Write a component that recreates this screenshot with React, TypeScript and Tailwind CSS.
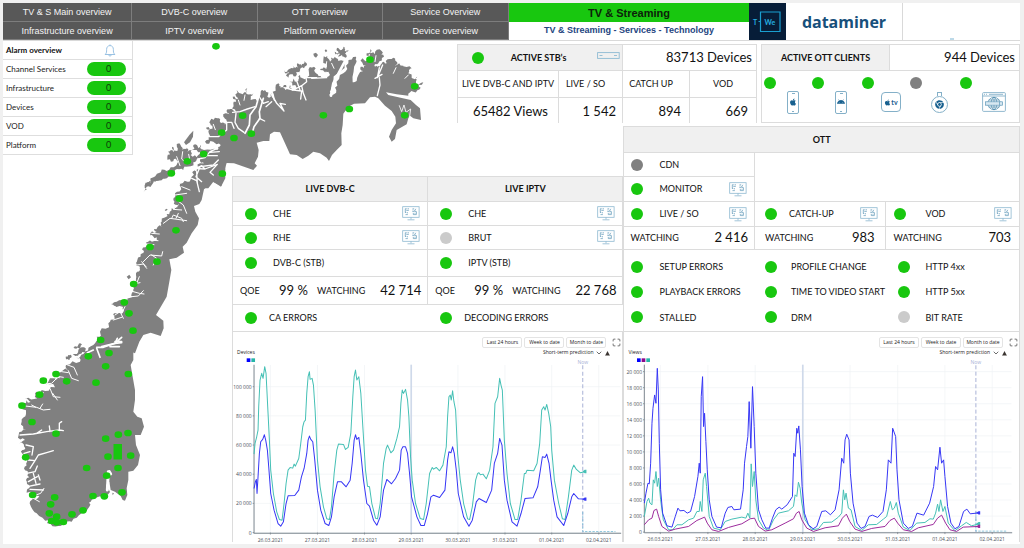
import React from "react";
import { FaAndroid, FaApple, FaChrome } from "react-icons/fa";
import { ChevronDown, Maximize } from "lucide-react";

type Pt = [number, number];

const parse = (s: string): Pt[] => s.trim().split(/\s+/).map((p) => p.split(",").map(Number) as Pt);

// Adds small inlets along a coarse coastline.
function coast(source: string, amount: number): string {
  let seed = 7;
  const rnd = () => {
    seed = (seed * 16807) % 2147483647;
    return seed / 2147483647 - 0.5;
  };
  let pts = parse(source);
  for (let pass = 0; pass < 2; pass++) {
    const next: Pt[] = [];
    pts.forEach((p, i) => {
      next.push(p);
      const q = pts[i + 1];
      if (!q) return;
      const len = Math.hypot(q[0] - p[0], q[1] - p[1]);
      if (len < 5) return;
      const off = rnd() * Math.min(len, 22) * amount;
      next.push([
        (p[0] + q[0]) / 2 + ((q[1] - p[1]) / len) * off,
        (p[1] + q[1]) / 2 - ((q[0] - p[0]) / len) * off,
      ]);
    });
    pts = next;
  }
  return pts.map((p) => p.map((n) => n.toFixed(1)).join(",")).join(" ");
}

const NORTH_COAST =
  "195,460 190,435 200,420 190,415 215,405 240,398 225,390 210,378 205,360 222,345 262,345 272,330 250,320 225,320 240,302 230,290 245,285 228,278 247,272 240,258 262,250 270,262 285,270 290,258 280,245 298,238 290,226 300,222 318,232 310,205 322,205 308,185 325,190 320,165 338,178 352,158 352,178 370,175 362,195 385,205 392,170 405,165 412,185 425,175 440,200 428,170 445,145 452,160 462,150 466,165 480,150 484,165 500,158 478,140 505,138 510,120 530,128 540,95 552,95 558,115 575,128 600,120 570,105 586,100 580,75 592,62 600,80 615,65 625,78 643,78 610,145 603,165 600,184 612,178 622,152 640,115 655,85 678,65 680,80 668,142 680,138 700,108 692,95 708,92 698,70 718,72 710,55 722,42 735,58 755,48 762,65 745,85 735,95 750,95 762,80 770,85 785,72 800,80 795,92 820,92 815,102 845,100 835,115 862,125 858,138 880,142 872,158 850,170 835,182";
const NORTH_INLAND =
  "800,178 768,172 775,180 842,195 858,210 870,220 873,255 850,250 840,242 835,250 830,268 800,285 795,312 785,320 777,305 785,285 798,265 796,245 785,228 765,212 745,190 735,185 720,187 705,205 672,206 655,215 640,236 638,270 634,295 635,330 620,345 606,360 597,378 590,368 570,355 550,350 535,362 518,372 500,360 480,358 465,325 450,292 432,290 420,298 418,318 400,318 380,323 386,345 384,365 374,385 381,392 370,405 312,385 290,384 285,400 286,430 273,455 250,440 235,460";

const MIDDLE_COAST =
  "405,610 265,610 280,585 300,545 325,520 345,505 342,490 372,482 368,470 333,462 350,455 382,452 398,440 400,425 395,405 415,395 408,375 420,360 410,348 412,330 430,310 436,292 450,270 470,262 450,256 470,246 462,237 485,230 485,215 510,205 500,192 515,175 532,165 520,150 525,130 542,110 535,100 562,95 575,80 590,65 600,40 640,20 676,20";
const MIDDLE_INLAND =
  "676,60 664,108 638,95 612,118 605,150 598,162 582,168 586,185 597,205 593,225 575,250 560,278 548,290 552,308 530,323 508,328 514,360 508,395 500,440 468,495 490,512 491,535 482,558 452,548 430,555 418,575";

const SOUTH_COAST =
  "328,425 326,448 310,470 275,480 268,500 245,520 215,545 190,550 175,558 142,550 148,540 110,520 93,500 95,480 118,468 80,458 90,440 78,420 84,400 74,380 82,360 66,340 76,325 58,310 75,300 56,285 78,270 65,245 78,222 70,190 92,186 75,176 112,175 105,160 125,150 165,142 130,130 160,115 180,115 170,95 205,92 198,75 240,65 228,52 250,42 285,22 290,-10";
const SOUTH_INLAND =
  "425,-10 400,30 400,60 392,75 398,110 405,150 405,180 400,215 412,230 425,235 432,260 422,285 405,285 408,315 420,345 414,375 400,392 385,395 385,420 380,445 382,465 375,482 368,480 362,468 345,455 332,450";

const DOTS: { at: [number, number]; pts: string }[] = [
  { at: [130, 35], pts: "258,34 720,74 854,154 658,222 580,241 824,241 338,242 364,296 312,309 275,293 221,357 172,379 124,415 277,416" },
  { at: [0, 150], pts: "538,146 528,241 450,291 471,335 401,402 373,457 387,490 399,542 302,570" },
  {
    at: [0, 340],
    pts: "327,39 265,49 317,79 385,102 168,102 130,122 200,124 288,128 119,164 66,197 96,246 168,281 317,296 355,284 384,279 77,352 324,350 392,347 260,384 354,384 320,407 98,465 164,472 279,468 313,469 366,457 152,493 148,520 170,530 155,543 170,547 190,546 216,523 249,511",
  },
];

function NorwayMap() {
  const third = "scale(0.33333)";
  return (
    <svg viewBox="3 41 426 503" className="col-start-1 row-start-1 w-[426px]" role="img" aria-label="Network map">
      <g fill="#808080">
        <g transform={`translate(130 35) ${third}`}>
          <polygon points={`${coast(NORTH_COAST, 0.9)} ${NORTH_INLAND}`} />
          <polygon points="162,322 178,300 190,287 189,305 180,322 168,330" />
          <polygon
            points={coast("112,365 114,350 130,352 126,335 142,348 148,325 158,345 170,335 172,352 185,345 182,360 205,368 190,382 168,395 160,405 135,405 128,420 108,422 95,436 75,432 68,446 50,452 45,446 72,426 85,415 110,408 138,392 150,378 132,372 112,374", 0.9)}
          />
          <polygon points={coast("185,345 190,330 205,340 212,330 215,342 205,352 200,345", 0.8)} />
          <polygon points={coast("462,105 478,102 490,104 488,92 505,98 502,85 515,92 524,78 529,92 512,100 508,112 495,108 500,120 482,118 475,128 468,122 478,113 464,112", 0.8)} />
          <polygon points={coast("614,50 626,52 622,38 636,44 640,35 644,48 656,46 645,56 650,66 636,60 626,66 630,56 616,58", 0.7)} />
          <polygon points="550,56 558,53 564,60 558,68 552,64" />
          <polygon points="584,46 588,43 592,48 587,52" />
        </g>
        <g transform={`translate(0 150) ${third}`}>
          <polygon points={`${coast(MIDDLE_COAST, 0.9)} ${MIDDLE_INLAND}`} />
          <polygon points={coast("430,128 434,105 445,98 455,84 475,72 500,68 512,62 505,80 482,84 470,90 450,96 440,110", 0.8)} />
          <polygon points="494,180 500,176 503,179 497,183" />
          <polygon points="380,380 388,374 393,382 386,388" />
          <polygon points="425,312 431,308 431,316 426,318" />
          <polygon points={coast("220,592 235,585 242,580 240,592 225,596", 0.7)} />
          <polygon points={coast("335,463 345,457 358,464 345,468", 0.7)} />
        </g>
        <g transform={`translate(0 340) ${third}`}>
          <polygon points={`${coast(SOUTH_COAST, 0.8)} ${SOUTH_INLAND}`} />
          <polygon points={coast("222,20 238,12 246,14 240,24 228,26", 0.7)} />
          <polygon points={coast("218,42 235,30 258,26 256,36 240,42 226,48", 0.7)} />
          <polygon points={coast("197,50 205,45 215,50 208,60 198,58", 0.7)} />
          <polygon points="337,458 342,460 338,466" />
        </g>
      </g>
      <g fill="none" stroke="#fff" strokeLinejoin="round" strokeLinecap="round">
        <g transform={`translate(130 35) ${third}`} strokeWidth="4">
          <path d="M748,128 L750,150 L742,182 M758,90 L742,128 L748,98 M735,130 L756,118" />
          <path d="M808,212 L815,230 L822,210 L828,232 L842,222 L838,250" strokeWidth="2.500" />
          <path d="M385,190 L378,215 L360,240 L358,270 L345,295 M400,190 L388,230 L390,250 L372,275 L368,290" strokeWidth="5" />
          <path d="M308,232 L330,230 L352,222 L375,215 M318,235 L315,262 L325,280 L342,292 M282,262 L305,262 L312,280 M385,180 L400,205 L415,200" />
          <path d="M425,178 L440,205 L462,228 L450,205 L466,208 M425,200 L408,215 M388,250 L404,258" />
          <path d="M462,158 L490,165 L515,152 L530,140 L528,128 L560,128 M490,165 L515,168 L512,192 M515,152 L520,175 L528,195 M545,130 L590,128 M498,132 L510,165" />
          <path d="M645,78 L610,145 L603,182 M685,78 L674,135" strokeWidth="8" />
          <path d="M552,90 L570,112 L590,112 M590,80 L588,100 M605,85 L612,100" strokeWidth="3" />
          <path d="M188,400 L225,402 L262,388 L240,412 L250,420 M225,402 L215,392 L190,405 M140,412 L190,400" />
          <path d="M205,372 L225,368 L240,350 L262,340 M230,362 L262,362 M240,352 L268,350 M238,305 L265,305 L290,285 L290,262" />
          <path d="M140,365 L150,392 M158,350 L155,372 L166,382 M176,358 L180,378 M125,392 L142,382" strokeWidth="3" />
          <path d="M715,75 L718,58 M738,62 L735,80 M250,268 L256,284 M325,195 L330,210 M345,180 L342,196 M798,98 L790,115 M835,120 L825,130" strokeWidth="3" />
        </g>
        <g transform={`translate(0 150) ${third}`} strokeWidth="3">
          <path d="M580,60 L600,50 L640,45 L655,30 M600,50 L588,80 L605,95 M575,85 L590,92 L598,125 M590,65 L592,100" strokeWidth="4" />
          <path d="M530,150 L550,165 L560,190 M535,165 L520,178 L545,180 M525,135 L560,130 M545,110 L570,120" />
          <path d="M490,220 L510,205 L560,212 M515,205 L520,195 L545,205 L550,215 M535,190 L528,205" />
          <path d="M430,335 L450,315 L485,318 L488,305 M455,315 L470,325 L460,345 M412,345 L430,342 L440,355 M425,335 L438,350" />
          <path d="M455,250 L478,252 M448,270 L474,272 M440,282 L462,284" />
          <path d="M395,440 L415,438 L430,422 M400,425 L418,430 L432,432 M418,380 L410,400 L420,398" />
          <path d="M345,495 L360,485 L370,505 M340,510 L365,502 M375,470 L365,490" />
          <path d="M305,590 L345,580 L365,562 M330,590 L358,590 M345,575 L365,575" strokeWidth="5" />
        </g>
        <g transform={`translate(0 340) ${third}`} strokeWidth="3">
          <path d="M290,25 L300,52 M290,22 L310,22 L345,10 L365,8 M262,38 L280,30 M345,10 L352,-5" strokeWidth="5" />
          <path d="M195,72 L222,82 L232,105 M205,92 L215,115 L235,122 M185,95 L205,98 M178,110 L190,112" />
          <path d="M130,132 L155,130 L170,115 M112,150 L150,145 L160,170 L180,172 M158,160 L172,180 M112,160 L130,158" />
          <path d="M75,198 L110,202 L130,210 L150,208 M120,205 L128,192 M95,195 L108,202" />
          <path d="M60,285 L100,282 L140,275 L178,270 L178,250 L185,245 M110,280 L125,270 M150,275 L148,258 M178,270 L190,272" strokeWidth="4" />
          <path d="M78,315 L100,320 L96,345 M72,340 L90,335 M85,360 L105,362 L115,345 L140,338 L160,332 M105,362 L90,385" strokeWidth="4" />
          <path d="M80,400 L105,395 L112,378 M85,425 L112,410 M82,440 L120,432 M100,400 L108,430 M115,405 L120,420 M90,448 L130,450" strokeWidth="4" />
          <path d="M100,468 L122,460 L132,445 M100,475 L118,485" />
          <path d="M325,395 L322,450 M328,395 L332,402" strokeWidth="9" />
        </g>
      </g>
      <g fill="#18c70f">
        {DOTS.map((group) => (
          <g key={group.at[1]} transform={`translate(${group.at.join(" ")}) ${third}`}>
            {parse(group.pts).map(([x, y]) => (
              <ellipse key={`${x}-${y}`} cx={x} cy={y} rx="11.5" ry="10" />
            ))}
          </g>
        ))}
        <rect x="113.5" y="444" width="8.5" height="15.5" />
      </g>
    </svg>
  );
}

const DOT_COLORS = { ok: "bg-[#18c70f]", off: "bg-[#808080]", idle: "bg-[#cbcbcb]" };
type State = keyof typeof DOT_COLORS;

function Dot({ state = "ok" }: { state?: State }) {
  return <span className={`size-3 shrink-0 rounded-full ${DOT_COLORS[state]}`} />;
}

function MonitorIcon() {
  return (
    <svg viewBox="0 0 18 15" className="h-[15px] w-[18px] shrink-0" fill="none" stroke="#8db8d0" strokeWidth="0.8">
      <rect x="0.7" y="0.7" width="16.4" height="10.6" />
      <path d="M9 11.3v2M5.5 13.8h7" />
      <g stroke="#5f98b8" strokeWidth="0.7">
        <path d="M3.300 2.600v4M3.300 2.800h1.500M5.500 2.800h1.500M4.300 4.400h2.500M3 6.400h1.200M5.300 6v1.400M3.500 8.600h2.400" />
        <path d="M10.500 2.800h1.700M10.500 4h1M10.300 5.600h2M13.800 2.800l-1.400 2.400 2 .4v2.800M11.300 7v1.600h3.200M13 6.800v1" />
      </g>
    </svg>
  );
}

const NAV = [
  "TV & S Main overview",
  "DVB-C overview",
  "OTT overview",
  "Service Overview",
  "Infrastructure overview",
  "IPTV overview",
  "Platform overview",
  "Device overview",
];

function Header() {
  return (
    <header className="flex h-[38px] border-b border-[#d9d9d9] bg-white font-['Liberation_Sans',Arial,sans-serif]">
      <nav className="grid w-[506px] shrink-0 grid-cols-[129fr_125fr_125fr_126fr] grid-rows-2 text-[9px] text-[#f4f4f4]">
        {NAV.map((label) => (
          <a key={label} href="#" className="flex items-center justify-center border-r border-b border-[#7d7d7d] bg-[#585858] pt-0.5">
            {label}
          </a>
        ))}
      </nav>
      <div className="grid w-60 shrink-0 grid-rows-2 text-center font-bold">
        <h1 className="flex items-center justify-center bg-[#18c70f] pt-0.5 text-[11px] text-[#0c220a]">TV &amp; Streaming</h1>
        <p className="flex items-center justify-center text-[9px] text-[#24457f]">TV &amp; Streaming - Services - Technology</p>
      </div>
      <div className="flex w-[37px] shrink-0 items-center justify-center bg-[#071d38]">
        <svg viewBox="0 0 37 37" className="size-[37px]" fill="none" stroke="#1a9fd0" strokeWidth="1.2">
          <path d="M11.5 15V9h19.5v19.5H11.5V21.500M9.500 18.500h2M11.500 15v6.500" />
          <g fill="#25aee0" stroke="none" fontFamily="Lato, sans-serif" fontWeight="700">
            <text x="4" y="21.5" fontSize="7">T</text>
            <text x="15.5" y="21.5" fontSize="7">We</text>
          </g>
        </svg>
      </div>
      <div className="flex w-[117px] shrink-0 items-center justify-center border-r border-[#d9d9d9] font-['Open_Sans',sans-serif] text-[16px] font-bold text-[#17507b]">
        dataminer
      </div>
      <div className="flex flex-1 items-end justify-center pr-5">
        <span className="h-0.5 w-1 bg-[#bcd9e8]" />
      </div>
    </header>
  );
}

function AlarmOverview() {
  return (
    <table className="w-[130px] border-separate border-spacing-0 border-r border-[#dedede] bg-white text-[8px]">
      <thead>
        <tr>
          <th className="h-[19px] border-b border-[#dedede] pl-[3px] text-left font-bold">Alarm overview</th>
          <th className="border-b border-[#dedede]">
            <svg viewBox="0 0 12 13" className="mx-auto h-[13px] w-3" fill="none" stroke="#8ebbe0" strokeWidth="0.9">
              <path d="M1 10.5h10M1.2 10.3C2.8 9 2.6 7.5 2.6 5.5 2.6 3 4 1.6 6 1.6s3.4 1.4 3.4 3.9c0 2 -.2 3.500 1.400 4.800M6 .5v1M4.800 11c.2 1.500 2.200 1.500 2.400 0" />
            </svg>
          </th>
        </tr>
      </thead>
      <tbody>
        {["Channel Services", "Infrastructure", "Devices", "VOD", "Platform"].map((name) => (
          <tr key={name}>
            <td className="h-[19px] border-b border-[#dedede] pl-[3px] text-[#222]">{name}</td>
            <td className="w-[45px] border-b border-[#dedede]">
              <span className="block h-3.5 w-[39px] rounded-full bg-[#18c70f] pl-1 text-center text-[9px] leading-[14px] text-[#0c3a08]">0</span>
            </td>
          </tr>
        ))}
      </tbody>
    </table>
  );
}

function ActiveStbs() {
  return (
    <table className="w-[299px] table-fixed border-collapse bg-white">
      <colgroup>
        <col className="w-[101px]" />
        <col className="w-16" />
        <col className="w-[67px]" />
        <col className="w-[67px]" />
      </colgroup>
      <tbody>
        <tr className="h-[26px]">
          <th colSpan={2} className="border border-[#dcdcdc] bg-[#f0f0f0]">
            <div className="flex items-center pl-3.5 font-bold">
              <Dot />
              <span className="flex-1 pr-1">ACTIVE STB&rsquo;s</span>
              <svg viewBox="0 0 23 8" className="mr-0.5 mb-1 h-2 w-[23px]" fill="none" stroke="#8ebbd3" strokeWidth="0.9">
                <rect x="0.6" y="0.6" width="21.600" height="5.800" />
                <path d="M2.500 3.500h3M17 3.500h3" />
              </svg>
            </div>
          </th>
          <td colSpan={2} className="border border-[#dcdcdc] pr-1 text-right text-[13px]">83713 Devices</td>
        </tr>
        <tr className="h-[27px]">
          {["LIVE DVB-C AND IPTV", "LIVE / SO", "CATCH UP", "VOD"].map((h, i) => (
            <th key={h} className={`border border-[#dcdcdc] font-normal whitespace-nowrap ${i > 0 && i < 3 ? "pr-2.5" : ""}`}>
              {h}
            </th>
          ))}
        </tr>
        <tr className="h-[25px] text-right text-[13px]">
          <td className="border-x border-[#dcdcdc] pt-0.5 pr-2.5">65482 Views</td>
          <td className="border-x border-[#dcdcdc] pt-0.5 pr-1.5">1 542</td>
          <td className="border-x border-[#dcdcdc] pt-0.5 pr-2">894</td>
          <td className="border-x border-[#dcdcdc] pt-0.5 pr-2">669</td>
        </tr>
      </tbody>
    </table>
  );
}

function Phone({ children }: { children: React.ReactNode }) {
  return (
    <span className="flex h-[23px] w-3 flex-col items-center justify-between rounded-[2px] border border-[#84b0c8] py-px text-[#17608f]">
      <span className="h-px w-[3px] bg-[#84b0c8]" />
      {children}
      <span className="h-px w-0.5 bg-[#84b0c8]" />
    </span>
  );
}

const CLIENTS: { name: string; state: State; icon: React.ReactNode }[] = [
  { name: "iOS", state: "ok", icon: <Phone><FaApple className="size-2" /></Phone> },
  { name: "Android", state: "ok", icon: <Phone><FaAndroid className="size-2" /></Phone> },
  {
    name: "Apple TV",
    state: "ok",
    icon: (
      <span className="flex size-5 items-center justify-center rounded border border-[#84b0c8] text-[7px] leading-none font-bold text-[#17608f]">
        <FaApple />
        tv
      </span>
    ),
  },
  {
    name: "Chromecast",
    state: "off",
    icon: (
      <span className="flex flex-col items-center text-[9px] text-[#17608f]">
        <span className="h-1 w-[5px] border border-b-0 border-[#84b0c8]" />
        <span className="flex size-[17px] items-center justify-center rounded-full border border-[#84b0c8]">
          <FaChrome />
        </span>
      </span>
    ),
  },
  {
    name: "Web",
    state: "ok",
    icon: (
      <svg viewBox="0 0 24 20" className="ml-2.5 h-5 w-6 shrink-0" fill="none" stroke="#84b0c8" strokeWidth="0.9">
        <rect x="0.6" y="0.6" width="22.800" height="18.800" rx="1" />
        <path d="M.6 4h22.800M2 2.300h1M4 2.300h1M7 2.300h14" />
        <g stroke="#4c8bad" strokeWidth="0.7">
          <circle cx="12" cy="11.500" r="6.200" />
          <ellipse cx="12" cy="11.500" rx="2.800" ry="6.200" />
          <path d="M12 5.300v12.400M6.800 8h10.400M6.800 15h10.400" />
        </g>
        <rect x="3.500" y="9.800" width="17" height="3.400" fill="#d8e8f1" stroke="#5f98b8" strokeWidth="0.7" />
        <path d="M17.500 9.800v3.400" stroke="#5f98b8" strokeWidth="0.7" />
      </svg>
    ),
  },
];

function ActiveOtt() {
  return (
    <section className="flex w-[259px] flex-col border border-[#dcdcdc] bg-white">
      <div className="flex h-[26px] items-center border-b border-[#dcdcdc]">
        <h2 className="flex h-full w-32 items-center justify-center border-r border-[#dcdcdc] bg-[#f0f0f0] font-bold">
          ACTIVE OTT CLIENTS
        </h2>
        <p className="flex-1 pr-1 text-right text-[13px]">944 Devices</p>
      </div>
      <ul className="grid flex-1 grid-cols-[48px_50px_48px_50px_1fr] pl-0.5">
        {CLIENTS.map((c) => (
          <li key={c.name} className="flex pt-1.5">
            <Dot state={c.state} />
            <span className="flex h-[38px] w-[34px] items-center justify-center pt-3">{c.icon}</span>
          </li>
        ))}
      </ul>
    </section>
  );
}

function Item({
  label,
  state = "ok",
  monitor = false,
  className = "gap-4 pl-3",
}: {
  label: string;
  state?: State;
  monitor?: boolean;
  className?: string;
}) {
  return (
    <div className={`flex items-center pr-[7px] ${className}`}>
      <Dot state={state} />
      <span className="flex-1 whitespace-nowrap">{label}</span>
      {monitor && <MonitorIcon />}
    </div>
  );
}

function Watching({ value, className = "" }: { value: string; className?: string }) {
  return (
    <div className={`flex items-center justify-between ${className}`}>
      <span>WATCHING</span>
      <span className="text-[13px]">{value}</span>
    </div>
  );
}

function LiveColumn({
  title,
  value,
  rows,
}: {
  title: string;
  value: string;
  rows: { label: string; state?: State; monitor?: boolean }[];
}) {
  return (
    <div className="grid grid-rows-[25px_24px_24px_27px_27px] divide-y divide-[#dcdcdc] border-r border-b border-[#dcdcdc]">
      <h2 className="flex items-center justify-center bg-[#f0f0f0] font-bold">{title}</h2>
      {rows.map((r) => (
        <Item key={r.label} {...r} />
      ))}
      <div className="grid grid-cols-[39px_38px_1fr] items-center pr-1.5 pl-[7px]">
        <span>QOE</span>
        <span className="text-[13px] whitespace-nowrap">99 %</span>
        <Watching value={value} />
      </div>
    </div>
  );
}

function LivePanel() {
  return (
    <section className="border-t border-l border-[#dcdcdc] bg-white">
      <div className="grid grid-cols-2">
        <LiveColumn
          title="LIVE DVB-C"
          value="42 714"
          rows={[{ label: "CHE", monitor: true }, { label: "RHE", monitor: true }, { label: "DVB-C (STB)" }]}
        />
        <LiveColumn
          title="LIVE IPTV"
          value="22 768"
          rows={[
            { label: "CHE", monitor: true },
            { label: "BRUT", state: "idle", monitor: true },
            { label: "IPTV (STB)" },
          ]}
        />
      </div>
      <div className="grid h-[27px] grid-cols-2 border-b border-[#dcdcdc]">
        <Item label="CA ERRORS" className="gap-3 pl-3" />
        <Item label="DECODING ERRORS" className="gap-3 pl-3" />
      </div>
    </section>
  );
}

const OTT_ERRORS: { label: string; state?: State }[] = [
  { label: "SETUP ERRORS" },
  { label: "PROFILE CHANGE" },
  { label: "HTTP 4xx" },
  { label: "PLAYBACK ERRORS" },
  { label: "TIME TO VIDEO START" },
  { label: "HTTP 5xx" },
  { label: "STALLED" },
  { label: "DRM" },
  { label: "BIT RATE", state: "idle" },
];

function OttPanel() {
  const line = "border-[#dcdcdc]";
  return (
    <section className={`border ${line} border-b-0 bg-white`}>
      <h2 className={`flex h-[26px] items-center justify-center border-b ${line} bg-[#f0f0f0] font-bold`}>OTT</h2>
      <div className="grid grid-cols-[131fr_131fr_134fr] grid-rows-[24px_25px_25px_23px]">
        <div className={`grid border-r border-b ${line}`}>
          <Item label="CDN" state="off" className="gap-4 pl-[7px]" />
        </div>
        <div className={`col-span-2 row-span-2 border-b ${line}`} />
        <div className={`grid border-r border-b ${line}`}>
          <Item label="MONITOR" monitor className="gap-4 pl-[7px]" />
        </div>
        <div className={`grid border-r border-b ${line}`}>
          <Item label="LIVE / SO" monitor className="gap-4 pl-[7px]" />
        </div>
        <div className={`grid border-r border-b ${line}`}>
          <Item label="CATCH-UP" monitor className="gap-3 pl-2.5" />
        </div>
        <div className={`grid border-b ${line}`}>
          <Item label="VOD" monitor className="gap-5 pl-2" />
        </div>
        <Watching value="2 416" className={`border-r border-b ${line} pr-1.5 pl-1.5`} />
        <Watching value="983" className={`border-r border-b ${line} pr-2.5 pl-2.5`} />
        <Watching value="703" className={`border-b ${line} pr-2 pl-2`} />
      </div>
      <div className={`grid h-[82px] grid-cols-[minmax(0,131fr)_minmax(0,131fr)_minmax(0,134fr)] grid-rows-3 border-b ${line} pt-1 pb-px`}>
        {OTT_ERRORS.map((e, i) => (
          <Item key={e.label} {...e} className={i % 3 === 1 ? "gap-3.5 pl-2.5" : i % 3 === 2 ? "gap-4 pl-3" : "gap-4 pl-[7px]"} />
        ))}
      </div>
    </section>
  );
}

interface ChartSpec {
  label: string;
  legend: string[];
  viewBox: string;
  legendX: number;
  left: number;
  axis: { y: number; text: string }[];
  days: number[];
  nowX: number;
  series: { color: string; points: string; end: string }[];
}

const DAY_LABELS = ["26.03.2021", "27.03.2021", "28.03.2021", "29.03.2021", "30.03.2021", "31.03.2021", "01.04.2021", "02.04.2021"];

const thousands = (n: number) => (n === 0 ? "0" : `${n} 000`);

const DEVICES: ChartSpec = {
  label: "Devices",
  legend: ["#0000ff", "#26b5a8"],
  viewBox: "3 28 389 184",
  legendX: 50,
  left: 72,
  axis: [0, 20, 40, 60, 80, 100].map((v) => ({ y: 607 - v * 4.37, text: thousands(v) })),
  days: [121, 262, 403, 543, 683, 824, 964, 1105],
  nowX: 1057,
  series: [
    {
      color: "#45c0b5",
      end: "1066,424",
      points:
        "72,372 75,340 80,320 84,300 86,230 90,150 95,130 99,145 104,110 108,130 110,170 114,250 118,330 122,420 130,490 140,545 148,568 156,570 162,520 168,460 174,420 180,412 188,414 192,402 196,408 206,385 212,340 218,290 222,275 226,270 230,190 234,140 238,125 240,148 246,145 250,165 255,240 262,390 270,470 280,530 290,566 298,568 304,530 312,430 320,360 325,342 340,343 346,358 354,352 362,310 368,200 372,140 376,120 380,150 386,140 392,190 398,290 406,420 412,468 418,470 425,520 436,564 442,566 450,520 460,400 468,355 472,345 482,368 490,360 500,325 508,290 512,220 516,180 520,190 526,178 532,210 536,260 541,380 546,450 556,520 570,565 580,568 588,520 598,430 606,412 610,417 618,412 628,422 638,405 648,350 652,260 656,200 660,195 663,210 667,182 671,215 676,240 682,370 690,450 700,520 712,566 718,568 726,530 736,450 742,430 746,428 750,434 758,432 768,446 778,420 788,350 794,220 802,200 808,145 812,165 816,180 822,330 830,430 840,520 854,568 862,568 872,510 882,430 886,430 890,420 910,422 920,400 928,340 934,240 940,230 944,240 949,223 955,250 961,290 964,360 972,450 985,520 996,566 1004,568 1014,500 1024,420 1030,405 1038,418 1050,428 1066,424",
    },
    {
      color: "#3636f5",
      end: "1066,507",
      points:
        "72,475 76,455 79,448 81,490 84,440 88,370 92,335 98,328 103,314 107,330 112,360 116,410 122,490 132,540 144,580 152,588 160,575 168,520 174,497 194,496 206,480 214,440 222,415 230,370 234,330 238,318 242,328 248,335 254,390 262,480 272,540 285,580 296,586 304,560 312,500 322,455 334,455 348,470 360,450 366,400 372,330 376,314 380,328 386,322 392,370 400,450 410,520 418,528 430,570 440,585 450,560 460,480 470,448 484,461 496,445 508,420 513,360 518,350 526,350 532,370 538,430 544,500 560,560 572,586 582,586 592,550 602,500 610,495 628,502 644,480 652,390 656,365 662,368 667,350 672,370 678,420 684,490 700,560 716,588 726,570 738,515 746,505 768,517 784,480 792,400 802,370 808,325 815,345 822,450 830,510 845,575 860,588 872,550 884,505 908,503 922,470 930,420 936,380 944,382 949,372 956,400 962,450 970,510 980,560 1000,586 1012,550 1024,500 1030,490 1044,506 1066,507",
    },
  ],
};

const VIEWS: ChartSpec = {
  label: "Views",
  legend: ["#0000ff", "#8b0a8b", "#26b5a8"],
  viewBox: "2 28 395 184",
  legendX: 45,
  left: 67,
  axis: [0, 2, 4, 6, 8, 10, 12, 14, 16, 18, 20].map((v) => ({ y: 607 - v * 24.1, text: thousands(v) })),
  days: [115, 258, 400, 543, 685, 828, 970, 1112],
  nowX: 1063,
  series: [
    {
      color: "#45c0b5",
      end: "1074,582",
      points:
        "67,560 75,515 80,505 84,520 90,525 94,450 98,460 102,425 106,470 110,445 116,510 124,570 140,600 152,600 165,585 180,585 200,570 215,565 225,545 232,545 235,515 240,545 244,450 250,430 254,470 262,560 275,595 295,600 310,575 330,568 360,562 372,565 378,550 384,565 388,402 392,470 397,425 402,510 410,570 425,595 440,602 455,570 470,550 500,543 515,530 520,495 525,500 530,457 535,475 540,520 550,570 570,600 590,597 605,578 630,577 650,562 660,550 665,480 669,510 673,490 680,535 688,540 700,590 720,602 740,585 765,584 785,568 795,560 806,515 812,540 818,535 824,518 830,550 845,592 865,602 885,580 910,578 925,567 935,568 942,550 948,523 952,545 957,510 964,545 970,530 980,580 1000,603 1020,588 1034,578 1050,588 1074,582",
    },
    {
      color: "#9c2a9c",
      end: "1074,590",
      points:
        "67,585 80,570 90,565 96,542 104,538 110,560 120,590 140,604 160,598 200,590 225,572 248,562 256,580 270,600 290,605 320,593 360,582 385,567 398,565 410,590 430,604 450,600 490,580 515,567 524,550 532,545 540,570 555,595 575,605 610,594 650,588 662,565 674,553 684,575 700,598 720,605 750,596 790,590 805,572 818,565 828,580 845,600 870,605 890,594 935,584 948,565 960,556 972,580 985,600 1005,605 1025,592 1074,590",
    },
    {
      color: "#3636f5",
      end: "1074,549",
      points:
        "67,520 72,490 78,460 82,462 86,400 90,280 93,235 98,195 102,220 106,115 109,180 112,340 116,480 122,550 135,588 150,592 160,560 168,535 174,543 186,542 196,550 206,545 218,500 228,440 232,400 235,430 238,200 242,140 245,290 248,250 252,335 256,420 262,510 270,560 284,592 298,594 310,550 318,533 330,530 336,540 356,538 364,480 368,400 374,350 378,320 382,215 387,355 392,170 397,290 402,430 410,540 420,570 432,595 442,595 452,565 462,540 472,532 480,538 496,525 512,500 516,370 520,380 525,295 528,310 531,288 536,360 541,470 548,550 560,585 574,597 585,590 600,545 612,543 626,555 640,540 652,480 660,385 666,400 670,330 675,313 682,330 686,430 694,520 706,580 718,596 730,590 742,560 752,556 768,563 784,545 794,480 800,390 808,400 813,295 822,320 826,420 832,510 845,580 860,596 872,590 886,550 906,556 924,520 936,470 942,410 948,420 955,352 960,400 966,390 970,440 978,530 988,580 1000,597 1012,590 1026,545 1036,538 1046,552 1074,549",
    },
  ],
};

function Chart({ spec }: { spec: ChartSpec }) {
  return (
    <section className="flex flex-col border-x border-[#dcdcdc] bg-white pt-[5px] font-['Open_Sans','Noto_Sans',sans-serif] text-[5px] text-[#222]">
      <div className="flex h-[11px] items-center justify-end gap-0.5 pr-px">
        {["Last 24 hours", "Week to date", "Month to date"].map((b) => (
          <button key={b} type="button" className="h-[11px] w-10 rounded-[2px] border border-[#e4e4e4] bg-white leading-[9px] whitespace-nowrap">
            {b}
          </button>
        ))}
        <button type="button" aria-label="Full screen" className="ml-1 text-[#444]">
          <Maximize size={9} strokeWidth={2} />
        </button>
      </div>
      <div className="flex h-2.5 items-center justify-between pr-3 pl-1">
        <span>{spec.label}</span>
        <button type="button" className="flex items-center gap-0.5">
          Short-term prediction
          <ChevronDown size={8} strokeWidth={2} />
          <svg viewBox="0 0 6 6" className="size-[5px]" fill="#3a3430">
            <path d="M3 0 5 4 6 5.500H0L1 4z" />
          </svg>
        </button>
      </div>
      <svg viewBox={spec.viewBox} className="w-full" fill="none" role="img" aria-label={`${spec.label} over time`}>
        <g transform="scale(0.33333)" fontFamily="'Open Sans', 'Noto Sans', sans-serif" fontSize="15">
          {spec.legend.map((c, i) => (
            <rect key={c} x={spec.legendX + i * 14} y="85" width="11" height="11" fill={c} />
          ))}
          {spec.axis.map((a) => (
            <g key={a.text}>
              <path d={`M${spec.left - 4} ${a.y}H1170`} stroke="#eef1f4" strokeWidth="2" />
              <path d={`M${spec.left - 4} ${a.y}h4`} stroke="#666f78" strokeWidth="2" />
              <text x={spec.left - 7} y={a.y + 6} textAnchor="end" fill="#4a5158">
                {a.text}
              </text>
            </g>
          ))}
          {spec.days.map((x, i) => (
            <g key={x}>
              <path d={`M${x} 105V607`} stroke="#eef1f4" strokeWidth="2" />
              <path d={`M${x} 607v6`} stroke="#666f78" strokeWidth="2" />
              <text x={x} y="634" textAnchor="middle" fill="#4a5158">
                {DAY_LABELS[i]}
              </text>
            </g>
          ))}
          <path d="M543 104V607" stroke="#cfd9ea" strokeWidth="5" />
          <path d={`M${spec.left} 104V609H1172`} stroke="#7b868f" strokeWidth="3" />
          <path d={`M${spec.nowX} 106V607`} stroke="#a9b2d6" strokeWidth="3" strokeDasharray="12 7" />
          <text x={spec.nowX} y="102" textAnchor="middle" fill="#a9b2d6">
            Now
          </text>
          <path d={`M${spec.nowX} 545V604H1155`} stroke="#79bcd6" strokeWidth="2.500" strokeDasharray="7 4" />
          {spec.series.map((s) => {
            const [ex, ey] = s.end.split(",").map(Number);
            return (
              <g key={s.color}>
                <polyline points={s.points} stroke={s.color} strokeWidth="3" strokeLinejoin="round" />
                <path d={`M${ex - 10} ${ey}l7 -5h5v10h-5z`} fill={s.color} />
              </g>
            );
          })}
        </g>
      </svg>
    </section>
  );
}

export default function App() {
  return (
    <div className="min-h-screen bg-[#f0f0f0] p-[3px] pr-1 font-['Lato',sans-serif] text-[9px] text-[#111]">
      <Header />
      <main className="grid bg-white">
        <NorwayMap />
        <div className="col-start-1 row-start-1 flex items-start">
          <div className="w-[229px] shrink-0">
            <AlarmOverview />
          </div>
          <div className="min-w-0 flex-1">
            <div className="flex h-[85px] items-start justify-end gap-1 pt-[3px]">
              <ActiveStbs />
              <div className="flex h-[79px]">
                <ActiveOtt />
              </div>
            </div>
            <div className="grid grid-cols-[391fr_396fr] items-start">
              <div className="pt-[50px]">
                <LivePanel />
                <Chart spec={DEVICES} />
              </div>
              <div>
                <OttPanel />
                <Chart spec={VIEWS} />
              </div>
            </div>
          </div>
        </div>
      </main>
    </div>
  );
}
